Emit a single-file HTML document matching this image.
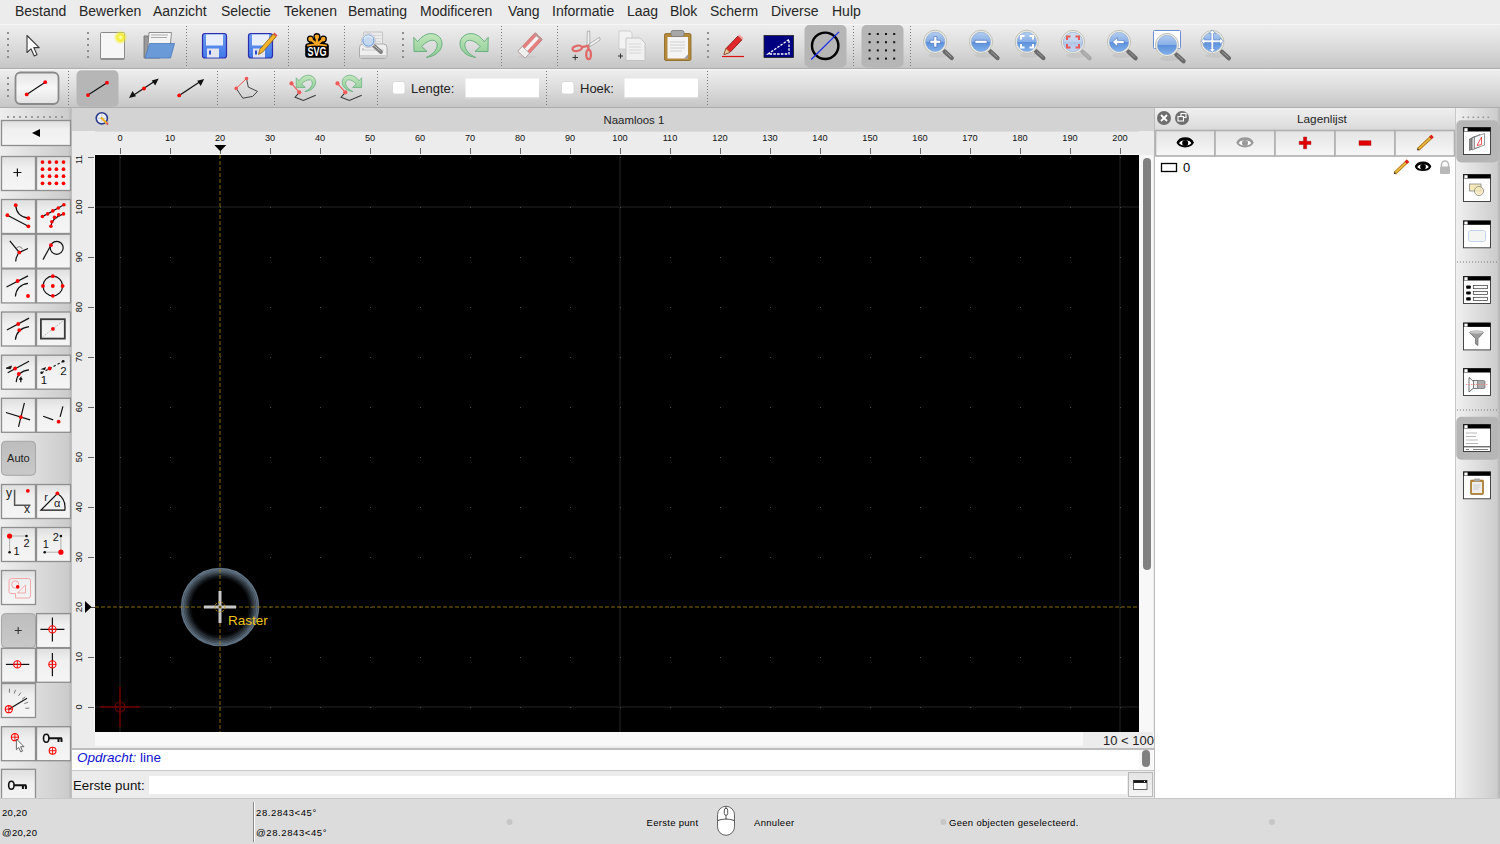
<!DOCTYPE html>
<html><head><meta charset="utf-8"><style>
*{margin:0;padding:0;box-sizing:border-box}
html,body{width:1500px;height:844px;overflow:hidden}
body{position:relative;background:#ececec;font-family:"Liberation Sans",sans-serif;color:#222}
.a{position:absolute}
.mi{position:absolute;top:2px;font-size:14px;line-height:18px;color:#262626}
.tb{background:linear-gradient(#eeeeee,#dedede 45%,#c6c6c6)}
svg{position:absolute;overflow:visible}
.st{position:absolute;font-size:9.5px;color:#000;letter-spacing:0.3px;line-height:11px;white-space:nowrap}
.rl{position:absolute;font-size:9.2px;line-height:10px;color:#111;text-align:center;width:30px}
.rv{position:absolute;font-size:9.2px;line-height:10px;color:#111;text-align:center;width:30px;transform:rotate(-90deg)}
</style></head><body>
<div class="a" style="left:0;top:0;width:1500px;height:24px;background:#ececec"></div>
<div class="mi" style="left:15px">Bestand</div>
<div class="mi" style="left:79px">Bewerken</div>
<div class="mi" style="left:153px">Aanzicht</div>
<div class="mi" style="left:221px">Selectie</div>
<div class="mi" style="left:284px">Tekenen</div>
<div class="mi" style="left:348px">Bemating</div>
<div class="mi" style="left:420px">Modificeren</div>
<div class="mi" style="left:508px">Vang</div>
<div class="mi" style="left:552px">Informatie</div>
<div class="mi" style="left:627px">Laag</div>
<div class="mi" style="left:670px">Blok</div>
<div class="mi" style="left:710px">Scherm</div>
<div class="mi" style="left:771px">Diverse</div>
<div class="mi" style="left:832px">Hulp</div>
<div class="a tb" style="left:0;top:24px;width:1500px;height:45px;border-top:1px solid #f6f6f6;border-bottom:1px solid #adadad"></div>
<div class="a tb" style="left:0;top:69px;width:1500px;height:39px;border-top:1px solid #f6f6f6;border-bottom:1px solid #adadad"></div>
<div class="a" style="left:0;top:108px;width:71px;height:690px;background:linear-gradient(90deg,#eeeeee,#cccccc 96%,#b8b8b8)"></div>
<div class="a" style="left:71px;top:108px;width:1084px;height:690px;background:#ececec;border-left:1px solid #c0c0c0;border-right:1px solid #bcbcbc"></div>
<div class="a" style="left:72px;top:108px;width:1082px;height:23px;background:#d3d3d3"></div>
<div class="a" style="left:603.5px;top:113px;font-size:11.4px;line-height:14px;color:#222">Naamloos 1</div>
<div class="a" style="left:95px;top:154px;width:1044px;height:1px;background:#fafafa"></div>
<div class="a" style="left:94px;top:155px;width:1px;height:577px;background:#fafafa"></div>
<div class="a" style="left:72px;top:131px;width:1082px;height:1px;background:#dcdcdc"></div>
<svg style="left:95px;top:155px" width="1044" height="577" viewBox="0 0 1044 577" shape-rendering="crispEdges"><rect width="1044" height="577" fill="#000"/><rect x="24" y="0" width="2" height="577" fill="#121212"/><rect x="524" y="0" width="2" height="577" fill="#121212"/><rect x="1024" y="0" width="2" height="577" fill="#121212"/><rect x="0" y="51" width="1044" height="2" fill="#121212"/><rect x="0" y="551" width="1044" height="2" fill="#121212"/><path d="M25 2h1v1h-1zM25 52h1v1h-1zM25 102h1v1h-1zM25 152h1v1h-1zM25 202h1v1h-1zM25 252h1v1h-1zM25 302h1v1h-1zM25 352h1v1h-1zM25 402h1v1h-1zM25 452h1v1h-1zM25 502h1v1h-1zM25 552h1v1h-1zM75 2h1v1h-1zM75 52h1v1h-1zM75 102h1v1h-1zM75 152h1v1h-1zM75 202h1v1h-1zM75 252h1v1h-1zM75 302h1v1h-1zM75 352h1v1h-1zM75 402h1v1h-1zM75 452h1v1h-1zM75 502h1v1h-1zM75 552h1v1h-1zM125 2h1v1h-1zM125 52h1v1h-1zM125 102h1v1h-1zM125 152h1v1h-1zM125 202h1v1h-1zM125 252h1v1h-1zM125 302h1v1h-1zM125 352h1v1h-1zM125 402h1v1h-1zM125 452h1v1h-1zM125 502h1v1h-1zM125 552h1v1h-1zM175 2h1v1h-1zM175 52h1v1h-1zM175 102h1v1h-1zM175 152h1v1h-1zM175 202h1v1h-1zM175 252h1v1h-1zM175 302h1v1h-1zM175 352h1v1h-1zM175 402h1v1h-1zM175 452h1v1h-1zM175 502h1v1h-1zM175 552h1v1h-1zM225 2h1v1h-1zM225 52h1v1h-1zM225 102h1v1h-1zM225 152h1v1h-1zM225 202h1v1h-1zM225 252h1v1h-1zM225 302h1v1h-1zM225 352h1v1h-1zM225 402h1v1h-1zM225 452h1v1h-1zM225 502h1v1h-1zM225 552h1v1h-1zM275 2h1v1h-1zM275 52h1v1h-1zM275 102h1v1h-1zM275 152h1v1h-1zM275 202h1v1h-1zM275 252h1v1h-1zM275 302h1v1h-1zM275 352h1v1h-1zM275 402h1v1h-1zM275 452h1v1h-1zM275 502h1v1h-1zM275 552h1v1h-1zM325 2h1v1h-1zM325 52h1v1h-1zM325 102h1v1h-1zM325 152h1v1h-1zM325 202h1v1h-1zM325 252h1v1h-1zM325 302h1v1h-1zM325 352h1v1h-1zM325 402h1v1h-1zM325 452h1v1h-1zM325 502h1v1h-1zM325 552h1v1h-1zM375 2h1v1h-1zM375 52h1v1h-1zM375 102h1v1h-1zM375 152h1v1h-1zM375 202h1v1h-1zM375 252h1v1h-1zM375 302h1v1h-1zM375 352h1v1h-1zM375 402h1v1h-1zM375 452h1v1h-1zM375 502h1v1h-1zM375 552h1v1h-1zM425 2h1v1h-1zM425 52h1v1h-1zM425 102h1v1h-1zM425 152h1v1h-1zM425 202h1v1h-1zM425 252h1v1h-1zM425 302h1v1h-1zM425 352h1v1h-1zM425 402h1v1h-1zM425 452h1v1h-1zM425 502h1v1h-1zM425 552h1v1h-1zM475 2h1v1h-1zM475 52h1v1h-1zM475 102h1v1h-1zM475 152h1v1h-1zM475 202h1v1h-1zM475 252h1v1h-1zM475 302h1v1h-1zM475 352h1v1h-1zM475 402h1v1h-1zM475 452h1v1h-1zM475 502h1v1h-1zM475 552h1v1h-1zM525 2h1v1h-1zM525 52h1v1h-1zM525 102h1v1h-1zM525 152h1v1h-1zM525 202h1v1h-1zM525 252h1v1h-1zM525 302h1v1h-1zM525 352h1v1h-1zM525 402h1v1h-1zM525 452h1v1h-1zM525 502h1v1h-1zM525 552h1v1h-1zM575 2h1v1h-1zM575 52h1v1h-1zM575 102h1v1h-1zM575 152h1v1h-1zM575 202h1v1h-1zM575 252h1v1h-1zM575 302h1v1h-1zM575 352h1v1h-1zM575 402h1v1h-1zM575 452h1v1h-1zM575 502h1v1h-1zM575 552h1v1h-1zM625 2h1v1h-1zM625 52h1v1h-1zM625 102h1v1h-1zM625 152h1v1h-1zM625 202h1v1h-1zM625 252h1v1h-1zM625 302h1v1h-1zM625 352h1v1h-1zM625 402h1v1h-1zM625 452h1v1h-1zM625 502h1v1h-1zM625 552h1v1h-1zM675 2h1v1h-1zM675 52h1v1h-1zM675 102h1v1h-1zM675 152h1v1h-1zM675 202h1v1h-1zM675 252h1v1h-1zM675 302h1v1h-1zM675 352h1v1h-1zM675 402h1v1h-1zM675 452h1v1h-1zM675 502h1v1h-1zM675 552h1v1h-1zM725 2h1v1h-1zM725 52h1v1h-1zM725 102h1v1h-1zM725 152h1v1h-1zM725 202h1v1h-1zM725 252h1v1h-1zM725 302h1v1h-1zM725 352h1v1h-1zM725 402h1v1h-1zM725 452h1v1h-1zM725 502h1v1h-1zM725 552h1v1h-1zM775 2h1v1h-1zM775 52h1v1h-1zM775 102h1v1h-1zM775 152h1v1h-1zM775 202h1v1h-1zM775 252h1v1h-1zM775 302h1v1h-1zM775 352h1v1h-1zM775 402h1v1h-1zM775 452h1v1h-1zM775 502h1v1h-1zM775 552h1v1h-1zM825 2h1v1h-1zM825 52h1v1h-1zM825 102h1v1h-1zM825 152h1v1h-1zM825 202h1v1h-1zM825 252h1v1h-1zM825 302h1v1h-1zM825 352h1v1h-1zM825 402h1v1h-1zM825 452h1v1h-1zM825 502h1v1h-1zM825 552h1v1h-1zM875 2h1v1h-1zM875 52h1v1h-1zM875 102h1v1h-1zM875 152h1v1h-1zM875 202h1v1h-1zM875 252h1v1h-1zM875 302h1v1h-1zM875 352h1v1h-1zM875 402h1v1h-1zM875 452h1v1h-1zM875 502h1v1h-1zM875 552h1v1h-1zM925 2h1v1h-1zM925 52h1v1h-1zM925 102h1v1h-1zM925 152h1v1h-1zM925 202h1v1h-1zM925 252h1v1h-1zM925 302h1v1h-1zM925 352h1v1h-1zM925 402h1v1h-1zM925 452h1v1h-1zM925 502h1v1h-1zM925 552h1v1h-1zM975 2h1v1h-1zM975 52h1v1h-1zM975 102h1v1h-1zM975 152h1v1h-1zM975 202h1v1h-1zM975 252h1v1h-1zM975 302h1v1h-1zM975 352h1v1h-1zM975 402h1v1h-1zM975 452h1v1h-1zM975 502h1v1h-1zM975 552h1v1h-1zM1025 2h1v1h-1zM1025 52h1v1h-1zM1025 102h1v1h-1zM1025 152h1v1h-1zM1025 202h1v1h-1zM1025 252h1v1h-1zM1025 302h1v1h-1zM1025 352h1v1h-1zM1025 402h1v1h-1zM1025 452h1v1h-1zM1025 502h1v1h-1zM1025 552h1v1h-1z" fill="#4a4a4a"/><g transform="translate(125 452)" shape-rendering="auto"><circle r="38.4" fill="none" stroke="#6a7e90" stroke-opacity="0.9" stroke-width="1.6"/><circle r="36.9" fill="none" stroke="#6a7e90" stroke-opacity="0.8" stroke-width="1.6"/><circle r="35.4" fill="none" stroke="#6a7e90" stroke-opacity="0.66" stroke-width="1.6"/><circle r="33.9" fill="none" stroke="#6a7e90" stroke-opacity="0.5" stroke-width="1.6"/><circle r="32.4" fill="none" stroke="#6a7e90" stroke-opacity="0.34" stroke-width="1.6"/><circle r="30.9" fill="none" stroke="#6a7e90" stroke-opacity="0.2" stroke-width="1.6"/><circle r="29.4" fill="none" stroke="#6a7e90" stroke-opacity="0.09" stroke-width="1.6"/></g><line x1="125" y1="0" x2="125" y2="577" stroke="#a88210" stroke-opacity="0.4" stroke-width="2" stroke-dasharray="4 2"/><line x1="0" y1="452" x2="1044" y2="452" stroke="#a88210" stroke-opacity="0.4" stroke-width="2" stroke-dasharray="4 2"/><g stroke="#580000" stroke-width="1.6" fill="none"><path d="M5 552H45M25 532V572"/></g><circle cx="25" cy="552" r="5" stroke="#6a0000" stroke-width="1.1" fill="none" shape-rendering="auto"/></svg>
<svg style="left:175px;top:562px" width="90" height="90" viewBox="-45 -45 90 90">
<path d="M-16 -1.5h32v3h-32zM-1.5 -16h3v32h-3z" fill="#c9c9c9"/>
<circle r="5" fill="none" stroke="#c89a00" stroke-width="1" stroke-dasharray="2 1.5"/>
<circle r="1.5" fill="#6e5300"/>
</svg>
<div class="a" style="left:228px;top:613px;font-size:13.5px;line-height:16px;color:#f2c418">Raster</div>
<div class="rl" style="left:105px;top:132.6px">0</div>
<div class="rl" style="left:155px;top:132.6px">10</div>
<div class="rl" style="left:205px;top:132.6px">20</div>
<div class="rl" style="left:255px;top:132.6px">30</div>
<div class="rl" style="left:305px;top:132.6px">40</div>
<div class="rl" style="left:355px;top:132.6px">50</div>
<div class="rl" style="left:405px;top:132.6px">60</div>
<div class="rl" style="left:455px;top:132.6px">70</div>
<div class="rl" style="left:505px;top:132.6px">80</div>
<div class="rl" style="left:555px;top:132.6px">90</div>
<div class="rl" style="left:605px;top:132.6px">100</div>
<div class="rl" style="left:655px;top:132.6px">110</div>
<div class="rl" style="left:705px;top:132.6px">120</div>
<div class="rl" style="left:755px;top:132.6px">130</div>
<div class="rl" style="left:805px;top:132.6px">140</div>
<div class="rl" style="left:855px;top:132.6px">150</div>
<div class="rl" style="left:905px;top:132.6px">160</div>
<div class="rl" style="left:955px;top:132.6px">170</div>
<div class="rl" style="left:1005px;top:132.6px">180</div>
<div class="rl" style="left:1055px;top:132.6px">190</div>
<div class="rl" style="left:1105px;top:132.6px">200</div>
<div class="rv" style="left:63.5px;top:702px">0</div>
<div class="rv" style="left:63.5px;top:652px">10</div>
<div class="rv" style="left:63.5px;top:602px">20</div>
<div class="rv" style="left:63.5px;top:552px">30</div>
<div class="rv" style="left:63.5px;top:502px">40</div>
<div class="rv" style="left:63.5px;top:452px">50</div>
<div class="rv" style="left:63.5px;top:402px">60</div>
<div class="rv" style="left:63.5px;top:352px">70</div>
<div class="rv" style="left:63.5px;top:302px">80</div>
<div class="rv" style="left:63.5px;top:252px">90</div>
<div class="rv" style="left:63.5px;top:202px">100</div>
<div class="rv" style="left:63.5px;top:152px">110</div>
<svg style="left:0;top:0" width="1500" height="844" shape-rendering="crispEdges"><path d="M120 148h1v6h-1zM170 148h1v6h-1zM220 148h1v6h-1zM270 148h1v6h-1zM320 148h1v6h-1zM370 148h1v6h-1zM420 148h1v6h-1zM470 148h1v6h-1zM520 148h1v6h-1zM570 148h1v6h-1zM620 148h1v6h-1zM670 148h1v6h-1zM720 148h1v6h-1zM770 148h1v6h-1zM820 148h1v6h-1zM870 148h1v6h-1zM920 148h1v6h-1zM970 148h1v6h-1zM1020 148h1v6h-1zM1070 148h1v6h-1zM1120 148h1v6h-1zM88 707h6v1h-6zM88 657h6v1h-6zM88 607h6v1h-6zM88 557h6v1h-6zM88 507h6v1h-6zM88 457h6v1h-6zM88 407h6v1h-6zM88 357h6v1h-6zM88 307h6v1h-6zM88 257h6v1h-6zM88 207h6v1h-6zM88 157h6v1h-6z" fill="#666"/><path d="M214.3 145h12l-6 6.3z" fill="#000" shape-rendering="auto"/><path d="M85 601v12l6.5-6z" fill="#000" shape-rendering="auto"/><rect x="91" y="606.5" width="4" height="1" fill="#444"/></svg>
<div class="a" style="left:72px;top:131px;width:23px;height:24px;background:#ececec"></div>
<div class="a" style="left:1139px;top:131px;width:14px;height:601px;background:#f8f8f8"></div>
<div class="a" style="left:1139px;top:131px;width:14px;height:24px;background:#ececec"></div>
<div class="a" style="left:1143px;top:158px;width:8px;height:412px;background:#808080;border-radius:4px"></div>
<div class="a" style="left:95px;top:732px;width:1059px;height:14px;background:#f8f8f8"></div>
<div class="a" style="left:1083px;top:732px;width:70px;height:16px;background:#ececec"></div>
<div class="a" style="left:1103px;top:733px;font-size:13px;line-height:15px;color:#222">10 &lt; 100</div>
<div class="a" style="left:72px;top:748px;width:1082px;height:2px;background:#bdbdbd"></div>
<div class="a" style="left:72px;top:750px;width:1082px;height:20px;background:#fff"></div>
<div class="a" style="left:1139px;top:750px;width:14px;height:20px;background:#f8f8f8"></div>
<div class="a" style="left:1142px;top:750px;width:8px;height:17px;background:#808080;border-radius:4px"></div>
<div class="a" style="left:77px;top:750px;font-size:13.5px;line-height:16px;color:#1010d0"><i>Opdracht:</i> line</div>
<div class="a" style="left:72px;top:770px;width:1082px;height:1px;background:#c8c8c8"></div>
<div class="a" style="left:72px;top:771px;width:1082px;height:27px;background:#ececec"></div>
<div class="a" style="left:73px;top:778px;font-size:13.3px;line-height:16px;color:#111">Eerste punt:</div>
<div class="a" style="left:149px;top:776px;width:978px;height:18px;background:#fff"></div>
<div class="a" style="left:1128px;top:772px;width:25px;height:25px;border:1px solid #b8b8b8;background:linear-gradient(#e4e4e4,#f4f4f4)"></div>
<div class="a" style="left:1155px;top:108px;width:300px;height:690px;background:#fff"></div>
<div class="a" style="left:1155px;top:108px;width:300px;height:22px;background:linear-gradient(#efefef,#dadada)"></div>
<div class="a" style="left:1297px;top:112px;font-size:11.8px;line-height:14px;color:#222">Lagenlijst</div>
<div class="a" style="left:1455px;top:108px;width:45px;height:690px;background:linear-gradient(90deg,#f0f0f0,#cdcdcd 92%,#b4b4b4);border-left:1px solid #c8c8c8"></div>
<div class="a" style="left:0;top:798px;width:1500px;height:46px;background:#dcdcdc;border-top:1px solid #c8c8c8"></div>
<div class="st" style="left:2px;top:807px">20,20</div>
<div class="st" style="left:2px;top:827px">@20,20</div>
<div class="a" style="left:253px;top:802px;width:1px;height:40px;background:#8a8a8a"></div>
<div class="st" style="left:256px;top:807px;letter-spacing:0.6px">28.2843&lt;45°</div>
<div class="st" style="left:256px;top:827px;letter-spacing:0.6px">@28.2843&lt;45°</div><svg style="left:0;top:0" width="1500" height="108" viewBox="0 0 1500 108"><defs>
<linearGradient id="btn" x1="0" y1="0" x2="0" y2="1"><stop offset="0" stop-color="#dedede"/><stop offset="0.35" stop-color="#f0f0f0"/><stop offset="1" stop-color="#f5f5f5"/></linearGradient>
<linearGradient id="prs" x1="0" y1="0" x2="0" y2="1"><stop offset="0" stop-color="#bdbdbd"/><stop offset="1" stop-color="#c9c9c9"/></linearGradient>
<linearGradient id="lens" x1="0" y1="0" x2="0" y2="1"><stop offset="0" stop-color="#b4cdef"/><stop offset="0.5" stop-color="#86aee6"/><stop offset="0.52" stop-color="#5d90dc"/><stop offset="1" stop-color="#7fb0ea"/></linearGradient>
<linearGradient id="lensf" x1="0" y1="0" x2="0" y2="1"><stop offset="0" stop-color="#d3dff0"/><stop offset="0.5" stop-color="#c0d2ec"/><stop offset="0.52" stop-color="#b0c6e8"/><stop offset="1" stop-color="#c4d6f0"/></linearGradient>
<linearGradient id="flop" x1="0" y1="0" x2="0" y2="1"><stop offset="0" stop-color="#6e9cf0"/><stop offset="1" stop-color="#3f78e8"/></linearGradient>
<linearGradient id="grn" x1="0" y1="0" x2="0" y2="1"><stop offset="0" stop-color="#c2e6bc"/><stop offset="1" stop-color="#8ccc94"/></linearGradient>
<linearGradient id="dockbtn" x1="0" y1="0" x2="0" y2="1"><stop offset="0" stop-color="#e4e4e4"/><stop offset="1" stop-color="#f7f7f7"/></linearGradient>
<linearGradient id="rb" x1="0" y1="0" x2="0" y2="1"><stop offset="0" stop-color="#e6e6e6"/><stop offset="0.5" stop-color="#f7f7f7"/><stop offset="1" stop-color="#e2e2e2"/></linearGradient>
<radialGradient id="glow" cx="0.5" cy="0.5" r="0.5"><stop offset="0" stop-color="#ffffc0"/><stop offset="0.45" stop-color="#f4ee30"/><stop offset="1" stop-color="#f4ee30" stop-opacity="0"/></radialGradient>
</defs><rect x="7" y="32" width="2" height="2" fill="#8e8e8e"/><rect x="7" y="38" width="2" height="2" fill="#8e8e8e"/><rect x="7" y="44" width="2" height="2" fill="#8e8e8e"/><rect x="7" y="50" width="2" height="2" fill="#8e8e8e"/><rect x="7" y="56" width="2" height="2" fill="#8e8e8e"/><rect x="87" y="32" width="2" height="2" fill="#8e8e8e"/><rect x="87" y="38" width="2" height="2" fill="#8e8e8e"/><rect x="87" y="44" width="2" height="2" fill="#8e8e8e"/><rect x="87" y="50" width="2" height="2" fill="#8e8e8e"/><rect x="87" y="56" width="2" height="2" fill="#8e8e8e"/><rect x="402" y="32" width="2" height="2" fill="#8e8e8e"/><rect x="402" y="38" width="2" height="2" fill="#8e8e8e"/><rect x="402" y="44" width="2" height="2" fill="#8e8e8e"/><rect x="402" y="50" width="2" height="2" fill="#8e8e8e"/><rect x="402" y="56" width="2" height="2" fill="#8e8e8e"/><rect x="707" y="32" width="2" height="2" fill="#8e8e8e"/><rect x="707" y="38" width="2" height="2" fill="#8e8e8e"/><rect x="707" y="44" width="2" height="2" fill="#8e8e8e"/><rect x="707" y="50" width="2" height="2" fill="#8e8e8e"/><rect x="707" y="56" width="2" height="2" fill="#8e8e8e"/><line x1="186.5" y1="26" x2="186.5" y2="66" stroke="#7a7a7a" stroke-width="1" stroke-dasharray="1 2"/><line x1="288.5" y1="26" x2="288.5" y2="66" stroke="#7a7a7a" stroke-width="1" stroke-dasharray="1 2"/><line x1="344.5" y1="26" x2="344.5" y2="66" stroke="#7a7a7a" stroke-width="1" stroke-dasharray="1 2"/><line x1="501.5" y1="26" x2="501.5" y2="66" stroke="#7a7a7a" stroke-width="1" stroke-dasharray="1 2"/><line x1="557.5" y1="26" x2="557.5" y2="66" stroke="#7a7a7a" stroke-width="1" stroke-dasharray="1 2"/><line x1="853.5" y1="26" x2="853.5" y2="66" stroke="#7a7a7a" stroke-width="1" stroke-dasharray="1 2"/><line x1="910.5" y1="26" x2="910.5" y2="66" stroke="#7a7a7a" stroke-width="1" stroke-dasharray="1 2"/><rect x="7" y="77" width="2" height="2" fill="#8e8e8e"/><rect x="7" y="83" width="2" height="2" fill="#8e8e8e"/><rect x="7" y="89" width="2" height="2" fill="#8e8e8e"/><rect x="7" y="95" width="2" height="2" fill="#8e8e8e"/><line x1="68.5" y1="71" x2="68.5" y2="105" stroke="#7a7a7a" stroke-width="1" stroke-dasharray="1 2"/><line x1="217.5" y1="71" x2="217.5" y2="105" stroke="#7a7a7a" stroke-width="1" stroke-dasharray="1 2"/><line x1="274.5" y1="71" x2="274.5" y2="105" stroke="#7a7a7a" stroke-width="1" stroke-dasharray="1 2"/><line x1="377.5" y1="71" x2="377.5" y2="105" stroke="#7a7a7a" stroke-width="1" stroke-dasharray="1 2"/><line x1="546.5" y1="71" x2="546.5" y2="105" stroke="#7a7a7a" stroke-width="1" stroke-dasharray="1 2"/><line x1="707.5" y1="71" x2="707.5" y2="105" stroke="#7a7a7a" stroke-width="1" stroke-dasharray="1 2"/><path d="M27 35.5V52.5L31 48.8L34.2 56L37 54.7L33.8 47.6H39.2Z" fill="#fff" stroke="#3a3a3a" stroke-width="1.1" stroke-linejoin="round"/><rect x="100.5" y="32.5" width="24" height="27" rx="1" fill="#f6f6f6" stroke="#8a8a8a"/><rect x="101" y="58" width="23" height="2" fill="#909090"/><circle cx="120.6" cy="37.4" r="7" fill="url(#glow)"/><path d="M144 36h9l2 2h5v20h-16z" fill="#9a9a9a" stroke="#6a6a6a" stroke-width="0.8"/><path d="M149 32.5h22.5l-2 20h-22z" fill="#f4f4f4" stroke="#777" stroke-width="0.8"/><path d="M151 35h17M151 37.5h16" stroke="#aaa" stroke-width="1.2"/><path d="M149.5 43.5h25l-4 14.5h-25.5z" fill="#6a9ad8" stroke="#4a78b8" stroke-width="0.8"/><rect x="202.5" y="33.5" width="24" height="24.5" rx="2.5" fill="url(#flop)" stroke="#2c2cb0" stroke-width="1.2"/><rect x="206" y="34.5" width="17" height="11" fill="#e8eefb"/><rect x="207" y="48.5" width="12" height="9" fill="#e4e4ec"/><rect x="209" y="50.5" width="2" height="4" fill="#2a4ad0"/><rect x="248.5" y="33.5" width="24" height="24.5" rx="2.5" fill="url(#flop)" stroke="#2c2cb0" stroke-width="1.2"/><rect x="252" y="34.5" width="17" height="11" fill="#e8eefb"/><rect x="253" y="48.5" width="12" height="9" fill="#e4e4ec"/><rect x="255" y="50.5" width="2" height="4" fill="#2a4ad0"/><path d="M258.5 54.5l1.2-5 13.5-15.5 3 2.6-13.5 15.5z" fill="#f2b52a" stroke="#8a5a10" stroke-width="0.8"/><path d="M273.2 34l3 2.6 1.2-1.4-3-2.6z" fill="#e05050"/><g fill="#000"><rect x="305.2" y="43.3" width="23.6" height="14.5" rx="3"/><circle cx="316.9" cy="36.6" r="3.5"/><circle cx="310.4" cy="39" r="3.5"/><circle cx="323.4" cy="39" r="3.5"/><path d="M308 44L312 38.5H322L326 44z"/></g><g stroke="#f5a623" stroke-width="2.4" stroke-linecap="round"><path d="M316.9 44.5V37M316.9 44.5L310.6 39.2M316.9 44.5L323.2 39.2"/></g><g fill="#f5a623"><circle cx="316.9" cy="36.8" r="2.3"/><circle cx="310.5" cy="39.1" r="2.3"/><circle cx="323.3" cy="39.1" r="2.3"/></g><path d="M307.2 45.6Q317 43.8 326.8 45.6" fill="none" stroke="#f5a623" stroke-width="1.7"/><text x="317.1" y="56" text-anchor="middle" font-family="Liberation Sans" font-weight="bold" font-size="12" fill="#fff" textLength="19" lengthAdjust="spacingAndGlyphs">SVG</text><rect x="363.5" y="32" width="19" height="15" rx="1" fill="#ececec" stroke="#c0c0c0" stroke-width="0.9"/><path d="M372 35.5h9M372 38.5h9M372 41.5h9" stroke="#d4d4d4" stroke-width="1"/><path d="M359.5 47.5a3.5 3.5 0 0 1 3.5-3.5h20.5a3.5 3.5 0 0 1 3.5 3.5v8.5a2.5 2.5 0 0 1-2.5 2.5h-22.5a2.5 2.5 0 0 1-2.5-2.5z" fill="#efefef" stroke="#a4a4a4" stroke-width="0.9"/><path d="M360 55h26.5v3h-26.5z" fill="#cfcfcf"/><path d="M362 50h22" stroke="#c8c8c8" stroke-width="0.9"/><circle cx="363" cy="49" r="0.6" fill="#666"/><path d="M373.3 45.3L381 52" stroke="#7c7c7c" stroke-width="3.8" stroke-linecap="round"/><path d="M373.8 45.2L380.6 51.1" stroke="#d8d8d8" stroke-width="1" opacity="0.8"/><circle cx="368.4" cy="40.6" r="7" fill="#f6f6f6" stroke="#b8b8b8" stroke-width="0.7"/><circle cx="368.4" cy="40.6" r="5.6" fill="#c4d8f0" stroke="#4f86d4" stroke-width="0.9"/><path d="M364 39a4.5 4.5 0 0 1 8.5 0" fill="none" stroke="#e8f0fa" stroke-width="1.4" opacity="0.8"/><path d="M413.8 37.3L414 51.6L427 51.4L421.7 46.5C425 43 429 40.3 432.5 40.3C436 40.3 437.2 43 437.2 45C437.2 50 432 55 426.3 57.4C436 56.5 442 50 442 44C442 37.5 437 33.6 431 33.6C426 33.6 421 37 417.7 41.7Z" fill="url(#grn)" stroke="#62aa7c" stroke-width="0.9" stroke-linejoin="round"/><path d="M413.8 37.3L414 51.6L427 51.4L421.7 46.5C425 43 429 40.3 432.5 40.3C436 40.3 437.2 43 437.2 45C437.2 50 432 55 426.3 57.4C436 56.5 442 50 442 44C442 37.5 437 33.6 431 33.6C426 33.6 421 37 417.7 41.7Z" transform="translate(902 0) scale(-1 1)" fill="url(#grn)" stroke="#62aa7c" stroke-width="0.9" stroke-linejoin="round"/><ellipse cx="527" cy="57" rx="10" ry="1.5" fill="#c8c8c8" opacity="0.8"/><g transform="rotate(-47 530 45.5)"><rect x="517.5" y="40.5" width="25.5" height="10" rx="1" fill="#e58080" stroke="#c46060" stroke-width="0.6"/><rect x="517.5" y="43.8" width="25.5" height="3.4" fill="#f2f2f2"/><rect x="541" y="40.5" width="2" height="10" fill="#b89a9a"/><rect x="517.5" y="40.5" width="6.5" height="10" fill="#efefef" stroke="#a0a0a0" stroke-width="0.6"/></g><path d="M587 46.5L587.3 31.2L589.8 31L589.8 46zM588.5 44.5L599.5 37.3L600.2 40L589.5 47z" fill="#f2f2f2" stroke="#9a9a9a" stroke-width="0.7"/><g fill="none" stroke="#e06a6a" stroke-width="2.3"><ellipse cx="577.2" cy="48.3" rx="4.8" ry="2.6" transform="rotate(-12 577.2 48.3)"/><ellipse cx="588.6" cy="54.5" rx="2.3" ry="4.6"/><path d="M581.8 47.2L588 45.8L588.6 50"/></g><path d="M572.5 57.5h5.5M575.2 54.8v5.5" stroke="#333" stroke-width="1"/><path d="M619 31h11l2 2v16h-13z" fill="#f2f2f2" stroke="#c8c8c8" stroke-width="0.8"/><path d="M626 38h14l5 5v17.5h-19z" fill="#f0f0f0" stroke="#bdbdbd" stroke-width="0.8"/><path d="M629 44h12M629 47h12M629 50h12M629 53h12" stroke="#d0d0d0" stroke-width="0.8"/><path d="M618 56h5M620.5 53.5v5" stroke="#333" stroke-width="1"/><rect x="664.5" y="33.5" width="26.5" height="27" rx="1.5" fill="#b48a3a" stroke="#8a6420" stroke-width="0.8"/><rect x="667.5" y="37" width="20.5" height="21.5" fill="#f4f4f4"/><path d="M670 42h15M670 45h15M670 48h15M670 51h12" stroke="#c8c8c8" stroke-width="0.8"/><path d="M684 58.5l4-4v4z" fill="#9a9a9a"/><rect x="671" y="30.5" width="13" height="6" rx="2" fill="#a8a8a8" stroke="#7a7a7a" stroke-width="0.8"/><path d="M722 56.5h22" stroke="#e01010" stroke-width="1.2"/><path d="M724 54.5l2-6 12-12.5 4 3.8-12 12.5z" fill="#e02828" stroke="#801010" stroke-width="0.8"/><path d="M724 54.5l2-6 4 3.8z" fill="#f0d0a0" stroke="#805020" stroke-width="0.6"/><path d="M738 36l4 3.8 1.5-1.6-4-3.8z" fill="#f4a0a0"/><rect x="764" y="35.5" width="29.5" height="22" fill="#000080" stroke="#222" stroke-width="0.8"/><path d="M768 54l21-14.5v14.5z" fill="none" stroke="#fff" stroke-width="1.3" stroke-dasharray="2.5 1.3"/><rect x="804.5" y="25" width="42" height="42.5" rx="5" fill="#b6b6b6"/><circle cx="825.2" cy="45.8" r="13.2" fill="none" stroke="#000" stroke-width="2.4"/><path d="M811.2 59.5L839 31.9" stroke="#1a2ae8" stroke-width="1.2"/><rect x="861.5" y="25" width="42" height="42.5" rx="5" fill="#b6b6b6"/><rect x="868.6" y="33.0" width="2" height="2" fill="#111"/><rect x="868.6" y="41.2" width="2" height="2" fill="#111"/><rect x="868.6" y="49.4" width="2" height="2" fill="#111"/><rect x="868.6" y="57.599999999999994" width="2" height="2" fill="#111"/><rect x="876.8000000000001" y="33.0" width="2" height="2" fill="#111"/><rect x="876.8000000000001" y="41.2" width="2" height="2" fill="#111"/><rect x="876.8000000000001" y="49.4" width="2" height="2" fill="#111"/><rect x="876.8000000000001" y="57.599999999999994" width="2" height="2" fill="#111"/><rect x="885.0" y="33.0" width="2" height="2" fill="#111"/><rect x="885.0" y="41.2" width="2" height="2" fill="#111"/><rect x="885.0" y="49.4" width="2" height="2" fill="#111"/><rect x="885.0" y="57.599999999999994" width="2" height="2" fill="#111"/><rect x="893.2" y="33.0" width="2" height="2" fill="#111"/><rect x="893.2" y="41.2" width="2" height="2" fill="#111"/><rect x="893.2" y="49.4" width="2" height="2" fill="#111"/><rect x="893.2" y="57.599999999999994" width="2" height="2" fill="#111"/><ellipse cx="938.2" cy="55.3" rx="10" ry="2.5" fill="#000" opacity="0.05"/><path d="M944.5 51.3L951.7 58.0" stroke="#6a6a6a" stroke-width="4.4" stroke-linecap="round"/><path d="M945.2 51.599999999999994L951.2 57.099999999999994" stroke="#c8c8c8" stroke-width="0.9" opacity="0.6"/><circle cx="935.2" cy="41.8" r="11.6" fill="#eeeee8" stroke="#bcbcb2" stroke-width="0.9"/><circle cx="935.2" cy="41.8" r="9.7" fill="url(#lens)" stroke="#8aa6d0" stroke-width="0.6"/><path d="M930 40.3h3.8v-3.8h3v3.8h3.8v3h-3.8v3.8h-3v-3.8h-3.8z" fill="#fff" stroke="#3a64b4" stroke-width="0.6"/><ellipse cx="984" cy="55.3" rx="10" ry="2.5" fill="#000" opacity="0.05"/><path d="M990.3 51.3L997.5 58.0" stroke="#6a6a6a" stroke-width="4.4" stroke-linecap="round"/><path d="M991 51.599999999999994L997 57.099999999999994" stroke="#c8c8c8" stroke-width="0.9" opacity="0.6"/><circle cx="981" cy="41.8" r="11.6" fill="#eeeee8" stroke="#bcbcb2" stroke-width="0.9"/><circle cx="981" cy="41.8" r="9.7" fill="url(#lens)" stroke="#8aa6d0" stroke-width="0.6"/><path d="M975 40.3h12v3h-12z" fill="#fff" stroke="#3a64b4" stroke-width="0.6"/><ellipse cx="1029.8" cy="55.3" rx="10" ry="2.5" fill="#000" opacity="0.05"/><path d="M1036.1 51.3L1043.3 58.0" stroke="#6a6a6a" stroke-width="4.4" stroke-linecap="round"/><path d="M1036.8 51.599999999999994L1042.8 57.099999999999994" stroke="#c8c8c8" stroke-width="0.9" opacity="0.6"/><circle cx="1026.8" cy="41.8" r="11.6" fill="#eeeee8" stroke="#bcbcb2" stroke-width="0.9"/><circle cx="1026.8" cy="41.8" r="9.7" fill="url(#lens)" stroke="#8aa6d0" stroke-width="0.6"/><path d="M1021 39.5v-3.5h3.5M1029.5 36h3.5v3.5M1033 44v3.5h-3.5M1024.5 47.5h-3.5v-3.5" fill="none" stroke="#fff" stroke-width="2"/><ellipse cx="1076" cy="55.5" rx="10" ry="2.5" fill="#000" opacity="0.05"/><path d="M1082.3 51.5L1089.5 58.2" stroke="#a8a8a8" stroke-width="4.4" stroke-linecap="round"/><path d="M1083 51.8L1089 57.3" stroke="#c8c8c8" stroke-width="0.9" opacity="0.6"/><circle cx="1073" cy="42" r="11.6" fill="#eeeee8" stroke="#bcbcb2" stroke-width="0.9"/><circle cx="1073" cy="42" r="9.7" fill="url(#lensf)" stroke="#8aa6d0" stroke-width="0.6"/><path d="M1067 40v-3.5h3.5M1075.5 36.5h3.5v3.5M1079 44v3.5h-3.5M1070.5 47.5h-3.5v-3.5" fill="none" stroke="#e85a5a" stroke-width="2"/><ellipse cx="1122" cy="55.5" rx="10" ry="2.5" fill="#000" opacity="0.05"/><path d="M1128.3 51.5L1135.5 58.2" stroke="#6a6a6a" stroke-width="4.4" stroke-linecap="round"/><path d="M1129 51.8L1135 57.3" stroke="#c8c8c8" stroke-width="0.9" opacity="0.6"/><circle cx="1119" cy="42" r="11.6" fill="#eeeee8" stroke="#bcbcb2" stroke-width="0.9"/><circle cx="1119" cy="42" r="9.7" fill="url(#lens)" stroke="#8aa6d0" stroke-width="0.6"/><path d="M1112.5 42l5-4.5v3h6.5v3h-6.5v3z" fill="#fff" stroke="#3a64b4" stroke-width="0.5"/><rect x="1153.5" y="30.5" width="27" height="18" rx="1" fill="#fff" stroke="#6a8ed0" stroke-width="1"/><ellipse cx="1170" cy="58.5" rx="10" ry="2.5" fill="#000" opacity="0.05"/><path d="M1176.3 54.5L1183.5 61.2" stroke="#6a6a6a" stroke-width="4.4" stroke-linecap="round"/><path d="M1177 54.8L1183 60.3" stroke="#c8c8c8" stroke-width="0.9" opacity="0.6"/><circle cx="1167" cy="45" r="11.6" fill="#eeeee8" stroke="#bcbcb2" stroke-width="0.9"/><circle cx="1167" cy="45" r="9.7" fill="url(#lens)" stroke="#8aa6d0" stroke-width="0.6"/><ellipse cx="1215.3" cy="55.5" rx="10" ry="2.5" fill="#000" opacity="0.05"/><path d="M1221.6 51.5L1228.8 58.2" stroke="#6a6a6a" stroke-width="4.4" stroke-linecap="round"/><path d="M1222.3 51.8L1228.3 57.3" stroke="#c8c8c8" stroke-width="0.9" opacity="0.6"/><circle cx="1212.3" cy="42" r="11.6" fill="#eeeee8" stroke="#bcbcb2" stroke-width="0.9"/><circle cx="1212.3" cy="42" r="9.7" fill="url(#lens)" stroke="#8aa6d0" stroke-width="0.6"/><path d="M1212.3 30l3.2 3.5h-2v6.5h6.5v-2l3.5 3.2-3.5 3.2v-2h-6.5v6.5h2l-3.2 3.5-3.2-3.5h2v-6.5h-6.5v2l-3.5-3.2 3.5-3.2v2h6.5v-6.5h-2z" fill="#fff" stroke="#5a84cc" stroke-width="0.6"/><rect x="15.5" y="72.5" width="43" height="31.5" rx="5" fill="url(#rb)" stroke="#8a8a8a" stroke-width="1.8"/><path d="M26.7 94.4L45.2 82.2" stroke="#111" stroke-width="1.2"/><circle cx="26.7" cy="94.4" r="1.9" fill="#f00"/><circle cx="45.2" cy="82.2" r="1.9" fill="#f00"/><rect x="76.5" y="70.2" width="42" height="36.5" rx="5" fill="#b6b6b6"/><path d="M88 95.1L107 82.7" stroke="#111" stroke-width="1.2"/><circle cx="88" cy="95.1" r="1.9" fill="#f00"/><circle cx="107" cy="82.7" r="1.9" fill="#f00"/><path d="M133 95.5L155 81" stroke="#111" stroke-width="1.2"/><path d="M129 98l3.5-7 3.5 5.2z M158.7 78.6l-7 1.8 3.5 5.2z" fill="#111"/><circle cx="144" cy="88.5" r="1.9" fill="#f00"/><path d="M179.2 95.4L201 81" stroke="#111" stroke-width="1.2"/><path d="M204.2 79l-7 1.8 3.5 5.2z" fill="#111"/><circle cx="179.2" cy="95.4" r="1.9" fill="#f00"/><path d="M246.5 78.5L248.3 87.1L257.5 91.4L252.6 96.4L242.8 98.2L236.2 88.4" fill="none" stroke="#444" stroke-width="1"/><path d="M246.5 78.5L236.2 88.4" stroke="#ee5555" stroke-width="1"/><circle cx="246.5" cy="78.5" r="1.8" fill="#ee5555"/><circle cx="236.2" cy="88.4" r="1.8" fill="#ee5555"/><path d="M299.3 92.3L295.1 97.2L303.4 100.4L315.7 95.3" fill="none" stroke="#3a3a3a" stroke-width="1.1"/><path d="M291.5 83.4L299.3 92.3" stroke="#ee5a5a" stroke-width="1.1"/><circle cx="291.5" cy="83.4" r="2.1" fill="#ee5a5a"/><circle cx="299.3" cy="92.3" r="2.1" fill="#ee5a5a"/><path d="M413.8 37.3L414 51.6L427 51.4L421.7 46.5C425 43 429 40.3 432.5 40.3C436 40.3 437.2 43 437.2 45C437.2 50 432 55 426.3 57.4C436 56.5 442 50 442 44C442 37.5 437 33.6 431 33.6C426 33.6 421 37 417.7 41.7Z" transform="translate(296.2 75.2) scale(0.69) translate(-413.8 -33.6)" fill="url(#grn)" stroke="#62aa7c" stroke-width="1" stroke-linejoin="round"/><path d="M345.3 92.3L341.1 97.2L349.4 100.4L361.7 95.3" fill="none" stroke="#3a3a3a" stroke-width="1.1"/><path d="M337.5 83.4L345.3 92.3" stroke="#ee5a5a" stroke-width="1.1"/><circle cx="337.5" cy="83.4" r="2.1" fill="#ee5a5a"/><circle cx="345.3" cy="92.3" r="2.1" fill="#ee5a5a"/><path d="M413.8 37.3L414 51.6L427 51.4L421.7 46.5C425 43 429 40.3 432.5 40.3C436 40.3 437.2 43 437.2 45C437.2 50 432 55 426.3 57.4C436 56.5 442 50 442 44C442 37.5 437 33.6 431 33.6C426 33.6 421 37 417.7 41.7Z" transform="translate(361.7 75.2) scale(-0.69 0.69) translate(-413.8 -33.6)" fill="url(#grn)" stroke="#62aa7c" stroke-width="1" stroke-linejoin="round"/><rect x="392.5" y="81.5" width="12.5" height="12.5" rx="2.5" fill="#fff" stroke="#d4d4d4" stroke-width="0.8"/><rect x="465.5" y="78.5" width="73.5" height="20" fill="#fff"/><rect x="465.5" y="97.5" width="73.5" height="1" fill="#c4c4c4"/><rect x="561.5" y="81.5" width="12.5" height="12.5" rx="2.5" fill="#fff" stroke="#d4d4d4" stroke-width="0.8"/><rect x="624.5" y="78.5" width="73.5" height="20" fill="#fff"/><rect x="624.5" y="97.5" width="73.5" height="1" fill="#c4c4c4"/><text x="411" y="92.8" font-family="Liberation Sans" font-size="13" fill="#222">Lengte:</text><text x="580" y="92.8" font-family="Liberation Sans" font-size="13" fill="#222">Hoek:</text></svg><svg style="left:0;top:108px;overflow:hidden" width="72" height="690" viewBox="0 108 72 690"><rect x="7" y="116" width="2" height="2" fill="#9a9a9a"/><rect x="13" y="116" width="2" height="2" fill="#9a9a9a"/><rect x="19" y="116" width="2" height="2" fill="#9a9a9a"/><rect x="25" y="116" width="2" height="2" fill="#9a9a9a"/><rect x="31" y="116" width="2" height="2" fill="#9a9a9a"/><rect x="37" y="116" width="2" height="2" fill="#9a9a9a"/><rect x="43" y="116" width="2" height="2" fill="#9a9a9a"/><rect x="49" y="116" width="2" height="2" fill="#9a9a9a"/><rect x="55" y="116" width="2" height="2" fill="#9a9a9a"/><rect x="61" y="116" width="2" height="2" fill="#9a9a9a"/><rect x="1.5" y="120.5" width="69" height="25" fill="url(#btn)" stroke="#8e8e8e" stroke-width="1.3"/><path d="M32 133L40 128.9V137z" fill="#000"/><rect x="1.5" y="156.5" width="34" height="34" fill="url(#btn)" stroke="#8e8e8e" stroke-width="1.3"/><g transform="translate(1.5 156.5)"><path d="M11.9 16h8M15.9 12v8" stroke="#111" stroke-width="1.2"/></g><rect x="36.5" y="156.5" width="34" height="34" fill="url(#btn)" stroke="#8e8e8e" stroke-width="1.3"/><g transform="translate(36.5 156.5)"><circle cx="6" cy="5.6" r="1.85" fill="#ff0000"/><circle cx="6" cy="12.7" r="1.85" fill="#ff0000"/><circle cx="6" cy="19.7" r="1.85" fill="#ff0000"/><circle cx="6" cy="26.8" r="1.85" fill="#ff0000"/><circle cx="13.1" cy="5.6" r="1.85" fill="#ff0000"/><circle cx="13.1" cy="12.7" r="1.85" fill="#ff0000"/><circle cx="13.1" cy="19.7" r="1.85" fill="#ff0000"/><circle cx="13.1" cy="26.8" r="1.85" fill="#ff0000"/><circle cx="19.9" cy="5.6" r="1.85" fill="#ff0000"/><circle cx="19.9" cy="12.7" r="1.85" fill="#ff0000"/><circle cx="19.9" cy="19.7" r="1.85" fill="#ff0000"/><circle cx="19.9" cy="26.8" r="1.85" fill="#ff0000"/><circle cx="27" cy="5.6" r="1.85" fill="#ff0000"/><circle cx="27" cy="12.7" r="1.85" fill="#ff0000"/><circle cx="27" cy="19.7" r="1.85" fill="#ff0000"/><circle cx="27" cy="26.8" r="1.85" fill="#ff0000"/></g><rect x="1.5" y="199.5" width="34" height="34" fill="url(#btn)" stroke="#8e8e8e" stroke-width="1.3"/><g transform="translate(1.5 199.5)"><path d="M5.9 15.7L26.9 26.8M14.2 5.7Q15 17 26.9 18.7" stroke="#111" stroke-width="1.2" fill="none"/><circle cx="5.9" cy="15.7" r="1.9" fill="#ff0000"/><circle cx="26.9" cy="26.8" r="1.9" fill="#ff0000"/><circle cx="14.2" cy="5.7" r="1.9" fill="#ff0000"/><circle cx="26.9" cy="18.7" r="1.9" fill="#ff0000"/></g><rect x="36.5" y="199.5" width="34" height="34" fill="url(#btn)" stroke="#8e8e8e" stroke-width="1.3"/><g transform="translate(36.5 199.5)"><path d="M5.9 17L11.1 14.4L16.3 11.4L21.8 8.5L27.4 5.3" stroke="#111" stroke-width="1.2" fill="none"/><path d="M14.4 26.8Q15 19 27 14.4" stroke="#111" stroke-width="1.2" fill="none"/><circle cx="5.9" cy="17" r="1.8" fill="#ff0000"/><circle cx="11.1" cy="14.4" r="1.8" fill="#ff0000"/><circle cx="16.3" cy="11.4" r="1.8" fill="#ff0000"/><circle cx="21.8" cy="8.5" r="1.8" fill="#ff0000"/><circle cx="27.4" cy="5.3" r="1.8" fill="#ff0000"/><circle cx="14.4" cy="26.8" r="1.8" fill="#ff0000"/><circle cx="15.4" cy="22.2" r="1.8" fill="#ff0000"/><circle cx="18" cy="17.9" r="1.8" fill="#ff0000"/><circle cx="22.2" cy="15.3" r="1.8" fill="#ff0000"/><circle cx="27" cy="14.4" r="1.8" fill="#ff0000"/></g><rect x="1.5" y="234.2" width="34" height="34" fill="url(#btn)" stroke="#8e8e8e" stroke-width="1.3"/><g transform="translate(1.5 234.2)"><path d="M8.3 6.7L17.8 18.2L26.5 14.3M17.8 18.2Q14.5 22 14.2 27.3" stroke="#111" stroke-width="1.2" fill="none"/><path d="M14.5 14.5A3.5 3.5 0 0 1 21 15" stroke="#555" stroke-width="0.7" fill="none"/><circle cx="17.8" cy="18.2" r="1.9" fill="#ff0000"/></g><rect x="36.5" y="234.2" width="34" height="34" fill="url(#btn)" stroke="#8e8e8e" stroke-width="1.3"/><g transform="translate(36.5 234.2)"><circle cx="20.2" cy="13.6" r="6.5" stroke="#111" stroke-width="1.2" fill="none"/><path d="M14.4 11L6.5 25.4" stroke="#111" stroke-width="1.2" fill="none"/><circle cx="14.4" cy="11" r="1.9" fill="#ff0000"/></g><rect x="1.5" y="268.9" width="34" height="34" fill="url(#btn)" stroke="#8e8e8e" stroke-width="1.3"/><g transform="translate(1.5 268.9)"><path d="M5 18.1L26.5 7M13.9 27.6Q15 16 26.5 14.5" stroke="#111" stroke-width="1.2" fill="none"/><circle cx="16.1" cy="12.1" r="1.9" fill="#ff0000"/><circle cx="26.5" cy="27.1" r="1.9" fill="#ff0000"/></g><rect x="36.5" y="268.9" width="34" height="34" fill="url(#btn)" stroke="#8e8e8e" stroke-width="1.3"/><g transform="translate(36.5 268.9)"><circle cx="16.3" cy="17.1" r="9.8" stroke="#111" stroke-width="1.2" fill="none"/><circle cx="16.3" cy="17.1" r="1.9" fill="#ff0000"/><circle cx="6.5" cy="17.1" r="1.9" fill="#ff0000"/><circle cx="26.1" cy="17.1" r="1.9" fill="#ff0000"/><circle cx="16.3" cy="7.3" r="1.9" fill="#ff0000"/><circle cx="16.3" cy="26.9" r="1.9" fill="#ff0000"/></g><rect x="1.5" y="312" width="34" height="34" fill="url(#btn)" stroke="#8e8e8e" stroke-width="1.3"/><g transform="translate(1.5 312)"><path d="M5.4 18L27.5 6.1M13.9 27.7Q15 16.5 27.5 14.6" stroke="#111" stroke-width="1.2" fill="none"/><circle cx="16.7" cy="12" r="1.9" fill="#ff0000"/><circle cx="17.8" cy="18.1" r="1.9" fill="#ff0000"/></g><rect x="36.5" y="312" width="34" height="34" fill="url(#btn)" stroke="#8e8e8e" stroke-width="1.3"/><g transform="translate(36.5 312)"><rect x="4.4" y="7.2" width="23.9" height="19.4" fill="none" stroke="#3a3a3a" stroke-width="1.8"/><path d="M6 25L27 8.5" stroke="#999" stroke-width="0.8" stroke-dasharray="1.5 1.5"/><circle cx="16.4" cy="16.9" r="1.9" fill="#ff0000"/></g><rect x="1.5" y="355.2" width="34" height="34" fill="url(#btn)" stroke="#8e8e8e" stroke-width="1.3"/><g transform="translate(1.5 355.2)"><path d="M6.2 17.6L27.5 6.1M14.7 26.9Q15.5 16 27.5 14.6" stroke="#111" stroke-width="1.2" fill="none"/><path d="M4.5 13l5.5-2.3-1 3z" fill="#111" stroke="#111" stroke-width="0.8"/><path d="M19.3 27v-4.5l-1.5 2M19.3 22.5l1.5 2" stroke="#111" stroke-width="1.2" fill="none"/><circle cx="13.6" cy="13.3" r="1.9" fill="#ff0000"/><circle cx="17.3" cy="18.8" r="1.9" fill="#ff0000"/></g><rect x="36.5" y="355.2" width="34" height="34" fill="url(#btn)" stroke="#8e8e8e" stroke-width="1.3"/><g transform="translate(36.5 355.2)"><path d="M5.1 17.6L26.7 6.1" stroke="#111" stroke-width="1.1" stroke-dasharray="2.5 2"/><circle cx="26.7" cy="6.1" r="1.3" fill="#111"/><circle cx="5.1" cy="17.6" r="1.3" fill="#111"/><path d="M4 14l5.5-2.3-1 3z" fill="#111"/><circle cx="13.1" cy="13.3" r="1.9" fill="#ff0000"/><text x="4.3" y="29.2" font-family="Liberation Sans" font-size="11.5" fill="#111">1</text><text x="23.8" y="19.5" font-family="Liberation Sans" font-size="11.5" fill="#111">2</text></g><rect x="1.5" y="398.3" width="34" height="34" fill="url(#btn)" stroke="#8e8e8e" stroke-width="1.3"/><g transform="translate(1.5 398.3)"><path d="M4.4 14.2L28.6 21.6M22.9 4.6L17 28.5" stroke="#111" stroke-width="1.2" fill="none"/><circle cx="19.3" cy="18.9" r="1.9" fill="#ff0000"/></g><rect x="36.5" y="398.3" width="34" height="34" fill="url(#btn)" stroke="#8e8e8e" stroke-width="1.3"/><g transform="translate(36.5 398.3)"><path d="M6.7 18L16.7 21.6M26.4 8.1L23.6 18.5" stroke="#111" stroke-width="1.2" fill="none"/><circle cx="22.1" cy="23.4" r="1.9" fill="#ff0000"/></g><rect x="1.5" y="441.3" width="34" height="34" rx="4" fill="url(#prs)" stroke="#a6a6a6" stroke-width="1"/><g transform="translate(1.5 441.3)"><text x="5.6" y="20.7" font-family="Liberation Sans" font-size="11" fill="#222">Auto</text></g><rect x="1.5" y="484.5" width="34" height="34" fill="url(#btn)" stroke="#8e8e8e" stroke-width="1.3"/><g transform="translate(1.5 484.5)"><path d="M13.1 5.2V20.7H29" stroke="#555" stroke-width="1.5" fill="none"/><text x="4.6" y="12" font-family="Liberation Sans" font-size="12" fill="#222">y</text><text x="22.6" y="28.4" font-family="Liberation Sans" font-size="12" fill="#222">x</text><circle cx="26.3" cy="6.3" r="1.9" fill="#ff0000"/></g><rect x="36.5" y="484.5" width="34" height="34" fill="url(#btn)" stroke="#8e8e8e" stroke-width="1.3"/><g transform="translate(36.5 484.5)"><path d="M4.4 25.7L20.9 9.1A17 17 0 0 1 28.3 25.7Z" stroke="#111" stroke-width="1.2" fill="none"/><text x="7.8" y="16" font-family="Liberation Sans" font-size="11" fill="#222">r</text><text x="17.6" y="22.8" font-family="Liberation Sans" font-size="11" fill="#222">α</text><circle cx="20.9" cy="8.8" r="1.9" fill="#ff0000"/></g><rect x="1.5" y="527.5" width="34" height="34" fill="url(#btn)" stroke="#8e8e8e" stroke-width="1.3"/><g transform="translate(1.5 527.5)"><path d="M8.1 8.5H25M8.1 8.5V24.7" stroke="#aaa" stroke-width="0.9"/><circle cx="8.1" cy="8.5" r="2.6" fill="#ff0000"/><circle cx="25" cy="8.5" r="1.3" fill="#111"/><circle cx="8.1" cy="24.7" r="1.3" fill="#111"/><text x="12" y="27" font-family="Liberation Sans" font-size="11" fill="#111">1</text><text x="22" y="19.3" font-family="Liberation Sans" font-size="11" fill="#111">2</text></g><rect x="36.5" y="527.5" width="34" height="34" fill="url(#btn)" stroke="#8e8e8e" stroke-width="1.3"/><g transform="translate(36.5 527.5)"><path d="M8.2 24.7H24.4V8.5" stroke="#aaa" stroke-width="0.9" fill="none"/><circle cx="24.4" cy="24.7" r="2.6" fill="#ff0000"/><circle cx="8.2" cy="24.7" r="1.3" fill="#111"/><circle cx="24.4" cy="8.5" r="1.3" fill="#111"/><text x="6.3" y="20.8" font-family="Liberation Sans" font-size="11" fill="#111">1</text><text x="16.3" y="13.9" font-family="Liberation Sans" font-size="11" fill="#111">2</text></g><rect x="1.5" y="570.5" width="34" height="34" fill="url(#btn)" stroke="#8e8e8e" stroke-width="1.3"/><g transform="translate(1.5 570.5)"><path d="M7.5 10.5a2.5 2.5 0 0 1 2.5-2.5h17a2 2 0 0 1 2 2v15.5a2 2 0 0 1-2 2h-13v-4.5h-4.5a2 2 0 0 1-2-2z" fill="none" stroke="#f4a0a0" stroke-width="0.9"/><circle cx="13.8" cy="14" r="3.6" fill="none" stroke="#f4a0a0" stroke-width="0.9"/><path d="M16 22.5L24 14.5V22.5z" fill="none" stroke="#f4a0a0" stroke-width="0.9"/><circle cx="16.2" cy="16.4" r="1.8" fill="#ff0000"/></g><rect x="1.5" y="613.6" width="34" height="34" rx="4" fill="url(#prs)" stroke="#a6a6a6" stroke-width="1"/><g transform="translate(1.5 613.6)"><path d="M13.2 16.9h7M16.7 13.4v7" stroke="#333" stroke-width="1.1"/></g><rect x="36.5" y="613.6" width="34" height="34" fill="url(#btn)" stroke="#8e8e8e" stroke-width="1.3"/><g transform="translate(36.5 613.6)"><path d="M3.9 15.8H27.9M15.9 3.8V27.8" stroke="#111" stroke-width="1.2"/><circle cx="15.9" cy="15.8" r="3.6" fill="none" stroke="#ff0000" stroke-width="1.1"/><path d="M12.3 15.8h7.2M15.9 12.200000000000001v7.2" stroke="#ff0000" stroke-width="0.9"/></g><rect x="1.5" y="648.3" width="34" height="34" fill="url(#btn)" stroke="#8e8e8e" stroke-width="1.3"/><g transform="translate(1.5 648.3)"><path d="M4.4 16.1H27.8" stroke="#111" stroke-width="1.2"/><circle cx="15.8" cy="16.1" r="3.6" fill="none" stroke="#ff0000" stroke-width="1.1"/><path d="M12.200000000000001 16.1h7.2M15.8 12.500000000000002v7.2" stroke="#ff0000" stroke-width="0.9"/></g><rect x="36.5" y="648.3" width="34" height="34" fill="url(#btn)" stroke="#8e8e8e" stroke-width="1.3"/><g transform="translate(36.5 648.3)"><path d="M15.9 4.6V28" stroke="#111" stroke-width="1.2"/><circle cx="15.9" cy="16.1" r="3.6" fill="none" stroke="#ff0000" stroke-width="1.1"/><path d="M12.3 16.1h7.2M15.9 12.500000000000002v7.2" stroke="#ff0000" stroke-width="0.9"/></g><rect x="1.5" y="683.5" width="34" height="34" fill="url(#btn)" stroke="#8e8e8e" stroke-width="1.3"/><g transform="translate(1.5 683.5)"><path d="M7.3 25.7L25.5 14.7" stroke="#111" stroke-width="1.2"/><g stroke="#7a7a7a" stroke-width="1"><path d="M7.9 9.2L8.0 5.2M12.7 10.1L14.0 6.3M17.0 12.4L19.3 9.1M20.5 15.8L23.7 13.4M22.8 20.1L26.6 18.7M23.8 24.8L27.8 24.6"/></g><circle cx="7.3" cy="25.7" r="3.6" fill="none" stroke="#ff0000" stroke-width="1.1"/><path d="M3.6999999999999997 25.7h7.2M7.3 22.099999999999998v7.2" stroke="#ff0000" stroke-width="0.9"/></g><rect x="1.5" y="726.7" width="34" height="34" fill="url(#btn)" stroke="#8e8e8e" stroke-width="1.3"/><g transform="translate(1.5 726.7)"><circle cx="13.4" cy="10.5" r="3.6" fill="none" stroke="#ff0000" stroke-width="1.1"/><path d="M9.8 10.5h7.2M13.4 6.9v7.2" stroke="#ff0000" stroke-width="0.9"/><path d="M14.9 12.3V23L17.3 20.8L19.3 25.2L21 24.4L19.1 20H22.5Z" fill="#fff" stroke="#444" stroke-width="0.8" stroke-linejoin="round"/></g><rect x="36.5" y="726.7" width="34" height="34" fill="url(#btn)" stroke="#8e8e8e" stroke-width="1.3"/><g transform="translate(36.5 726.7)"><ellipse cx="9.7" cy="11.6" rx="2.7" ry="4" fill="none" stroke="#111" stroke-width="1.6"/><path d="M12.4 11.6H25.4M22 11.6v3.8M25 11.6v3.8" stroke="#111" stroke-width="2"/><circle cx="16.1" cy="24" r="3.4" fill="none" stroke="#ff0000" stroke-width="1.1"/><path d="M12.700000000000001 24h6.8M16.1 20.6v6.8" stroke="#ff0000" stroke-width="0.9"/></g><rect x="1.5" y="769.3" width="34" height="40" fill="url(#btn)" stroke="#8e8e8e" stroke-width="1.3"/><g transform="translate(1.5 769.3)"><ellipse cx="9.85" cy="16" rx="2.7" ry="4" fill="none" stroke="#111" stroke-width="1.6"/><path d="M12.5 16H24.8M21.4 16v3.8M24.4 16v3.8" stroke="#111" stroke-width="2"/></g></svg><svg style="left:0;top:0" width="1500" height="844" viewBox="0 0 1500 844"><circle cx="101.8" cy="118.3" r="5.6" fill="#f0f0f8" stroke="#2c3c8c" stroke-width="1.6"/><path d="M98 118.3h7.5M101.8 114.5v7.5" stroke="#9aa" stroke-width="0.6"/><path d="M101 117.5L107 123.5" stroke="#f0b020" stroke-width="2"/><path d="M106.5 123l1.5 1.5" stroke="#e05050" stroke-width="2"/><circle cx="1164" cy="118" r="7" fill="#6e6e6e"/><path d="M1161 115l6 6M1167 115l-6 6" stroke="#fff" stroke-width="1.8"/><circle cx="1182" cy="118" r="7" fill="#6e6e6e"/><rect x="1181" y="113.5" width="5" height="4" fill="none" stroke="#fff" stroke-width="1.1"/><rect x="1178" y="116.5" width="5.5" height="4.5" fill="#6e6e6e" stroke="#fff" stroke-width="1.1"/><rect x="1155.5" y="130.5" width="59.5" height="25.5" fill="url(#dockbtn)" stroke="#b0b0b0" stroke-width="1.6"/><rect x="1215" y="130.5" width="60" height="25.5" fill="url(#dockbtn)" stroke="#b0b0b0" stroke-width="1.6"/><rect x="1275" y="130.5" width="60" height="25.5" fill="url(#dockbtn)" stroke="#b0b0b0" stroke-width="1.6"/><rect x="1335" y="130.5" width="60" height="25.5" fill="url(#dockbtn)" stroke="#b0b0b0" stroke-width="1.6"/><rect x="1395" y="130.5" width="59.5" height="25.5" fill="url(#dockbtn)" stroke="#b0b0b0" stroke-width="1.6"/><g transform="translate(1185.2 142.6) scale(1.0)"><path d="M-7.5 0.3C-5 -4.5 5 -4.5 7.5 0.3C5 5 -5 5 -7.5 0.3Z" fill="#fff" stroke="#000" stroke-width="2"/><circle cx="0" cy="0.3" r="3" fill="#000"/><path d="M-7.5 0.3C-5 -5.5 5 -5.5 7.5 0.3" fill="none" stroke="#000" stroke-width="2.6"/></g><g transform="translate(1245 142.6) scale(1.0)"><path d="M-7.5 0.3C-5 -4.5 5 -4.5 7.5 0.3C5 5 -5 5 -7.5 0.3Z" fill="#fff" stroke="#9a9a9a" stroke-width="2"/><circle cx="0" cy="0.3" r="3" fill="#9a9a9a"/><path d="M-7.5 0.3C-5 -5.5 5 -5.5 7.5 0.3" fill="none" stroke="#9a9a9a" stroke-width="2.6"/></g><path d="M1303.5 137h3.2v4.3h4.3v3.2h-4.3v4.3h-3.2v-4.3h-4.3v-3.2h4.3z" fill="#e00000" stroke="#900" stroke-width="0.4"/><rect x="1359" y="140.8" width="12" height="4.5" fill="#e00000" stroke="#900" stroke-width="0.4"/><path d="M1418 149.5L1432.5 136" stroke="#b07818" stroke-width="3.4" stroke-linecap="butt"/><path d="M1418 149.5L1432.5 136" stroke="#f0c040" stroke-width="1.6"/><path d="M1430.3 138L1432.5 136" stroke="#e02020" stroke-width="3.4"/><circle cx="1418" cy="149.5" r="0.9" fill="#333"/><rect x="1161.5" y="163.5" width="15" height="8" fill="#fff" stroke="#000" stroke-width="1.3"/><text x="1183" y="171.6" font-family="Liberation Sans" font-size="13" fill="#000">0</text><path d="M1394.8 173.2L1408 160.8" stroke="#b07818" stroke-width="3.4" stroke-linecap="butt"/><path d="M1394.8 173.2L1408 160.8" stroke="#f0c040" stroke-width="1.6"/><path d="M1405.8 162.8L1408 160.8" stroke="#e02020" stroke-width="3.4"/><circle cx="1394.8" cy="173.2" r="0.9" fill="#333"/><g transform="translate(1423 166.5) scale(0.95)"><path d="M-7.5 0.3C-5 -4.5 5 -4.5 7.5 0.3C5 5 -5 5 -7.5 0.3Z" fill="#fff" stroke="#000" stroke-width="2"/><circle cx="0" cy="0.3" r="3" fill="#000"/><path d="M-7.5 0.3C-5 -5.5 5 -5.5 7.5 0.3" fill="none" stroke="#000" stroke-width="2.6"/></g><path d="M1441.5 167v-2.5a3.5 3.5 0 0 1 7 0v2.5" fill="none" stroke="#b8b8b8" stroke-width="1.5"/><rect x="1440" y="166.5" width="10" height="7.5" rx="1" fill="#b8b8b8"/><rect x="1462.5" y="116.5" width="1.6" height="1.6" fill="#9a9a9a"/><rect x="1467.5" y="116.5" width="1.6" height="1.6" fill="#9a9a9a"/><rect x="1472.5" y="116.5" width="1.6" height="1.6" fill="#9a9a9a"/><rect x="1477.5" y="116.5" width="1.6" height="1.6" fill="#9a9a9a"/><rect x="1482.5" y="116.5" width="1.6" height="1.6" fill="#9a9a9a"/><rect x="1487.5" y="116.5" width="1.6" height="1.6" fill="#9a9a9a"/><line x1="1457" y1="262" x2="1499" y2="262" stroke="#7a7a7a" stroke-dasharray="1 2"/><line x1="1457" y1="410" x2="1499" y2="410" stroke="#7a7a7a" stroke-dasharray="1 2"/><rect x="1456.3" y="120.3" width="42.2" height="42.2" rx="5" fill="#b6b6b6"/><rect x="1456.3" y="416.8" width="42.5" height="42.9" rx="5" fill="#b6b6b6"/><rect x="1463.5" y="127.5" width="27" height="27" fill="#fff" stroke="#2a2a2a" stroke-width="0.85"/><rect x="1463.5" y="127.5" width="27" height="4" fill="#000"/><rect x="1464.3" y="128.2" width="3.3" height="3" fill="#fff"/><path d="M1469.5 139l6-3v11.5l-6 3z" fill="#8a8a8a" stroke="#555" stroke-width="0.6"/><path d="M1472 138l8-3.5v12l-8 3.5z" fill="#d8d8d8" stroke="#555" stroke-width="0.6"/><path d="M1474.5 137l10-3.5v11.5l-10 3.5z" fill="#fff" stroke="#555" stroke-width="0.6"/><path d="M1477 145.5l4.5-8.5v7.5z" fill="none" stroke="#e83030" stroke-width="0.8"/><rect x="1463.5" y="174.5" width="27" height="27" fill="#fff" stroke="#2a2a2a" stroke-width="0.85"/><rect x="1463.5" y="174.5" width="27" height="4" fill="#000"/><rect x="1464.3" y="175.2" width="3.3" height="3" fill="#fff"/><rect x="1469.5" y="184" width="11.5" height="7" fill="#f4e8b8" stroke="#888" stroke-width="0.8"/><circle cx="1479" cy="191" r="4.6" fill="#f4e8b8" fill-opacity="0.8" stroke="#888" stroke-width="0.8"/><rect x="1463.5" y="220.8" width="27" height="27" fill="#fff" stroke="#2a2a2a" stroke-width="0.85"/><rect x="1463.5" y="220.8" width="27" height="4" fill="#000"/><rect x="1464.3" y="221.5" width="3.3" height="3" fill="#fff"/><rect x="1468.5" y="230.5" width="17" height="11" rx="2" fill="#f4f4f2" stroke="#c4d4ea" stroke-width="1"/><rect x="1463.5" y="276.5" width="27" height="27" fill="#fff" stroke="#2a2a2a" stroke-width="0.85"/><rect x="1463.5" y="276.5" width="27" height="4" fill="#000"/><rect x="1464.3" y="277.2" width="3.3" height="3" fill="#fff"/><rect x="1466.2" y="285.5" width="4.6" height="3.2" rx="0.8" fill="#000"/><rect x="1473.3" y="285.5" width="14.3" height="3.2" fill="#fff" stroke="#333" stroke-width="0.7"/><rect x="1466.2" y="291.4" width="4.6" height="3.2" rx="0.8" fill="#000"/><rect x="1473.3" y="291.4" width="14.3" height="3.2" fill="#fff" stroke="#333" stroke-width="0.7"/><rect x="1466.2" y="297.3" width="4.6" height="3.2" rx="0.8" fill="#000"/><rect x="1473.3" y="297.3" width="14.3" height="3.2" fill="#fff" stroke="#333" stroke-width="0.7"/><rect x="1463.5" y="322.9" width="27" height="27" fill="#fff" stroke="#2a2a2a" stroke-width="0.85"/><rect x="1463.5" y="322.9" width="27" height="4" fill="#000"/><rect x="1464.3" y="323.59999999999997" width="3.3" height="3" fill="#fff"/><path d="M1469.5 332.5c0-2 14-2 14 0l-5.5 6v7l-2.5-1.5v-5.5z" fill="#9a9a9a" stroke="#555" stroke-width="0.6"/><ellipse cx="1476.5" cy="332.3" rx="7" ry="1.5" fill="#c8c8c8"/><rect x="1463.5" y="368.5" width="27" height="27" fill="#fff" stroke="#2a2a2a" stroke-width="0.85"/><rect x="1463.5" y="368.5" width="27" height="4" fill="#000"/><rect x="1464.3" y="369.2" width="3.3" height="3" fill="#fff"/><path d="M1469 377.5v14.5l4.5-4v-6.5z" fill="#fff" stroke="#333" stroke-width="0.7"/><rect x="1473.5" y="380.5" width="11.5" height="8" rx="1.5" fill="#aaa" stroke="#555" stroke-width="0.6"/><rect x="1473.5" y="380.5" width="4" height="8" fill="#eee" stroke="#555" stroke-width="0.6"/><path d="M1466 384.5h22" stroke="#f08080" stroke-width="0.8" stroke-dasharray="1.5 1"/><rect x="1463.5" y="424.5" width="27" height="27" fill="#fff" stroke="#2a2a2a" stroke-width="0.85"/><rect x="1463.5" y="424.5" width="27" height="4" fill="#000"/><rect x="1464.3" y="425.2" width="3.3" height="3" fill="#fff"/><g stroke="#b0b0b0" stroke-width="0.9"><path d="M1466 433h11M1466 436.5h10M1466 440h12M1466 443.5h12"/></g><path d="M1464 446.8h26" stroke="#000" stroke-width="0.8"/><path d="M1466 449.5h3M1473 449.5h15" stroke="#666" stroke-width="0.8"/><rect x="1463.5" y="471.8" width="27" height="27" fill="#fff" stroke="#2a2a2a" stroke-width="0.85"/><rect x="1463.5" y="471.8" width="27" height="4" fill="#000"/><rect x="1464.3" y="472.5" width="3.3" height="3" fill="#fff"/><rect x="1470.5" y="480" width="13" height="14.5" rx="1" fill="#b88a3a" stroke="#8a6420" stroke-width="0.6"/><rect x="1472" y="482" width="10" height="11" fill="#eee"/><rect x="1474" y="478.5" width="6" height="3" rx="1" fill="#a8a8a8"/><path d="M1473.5 485h7M1473.5 487h7M1473.5 489h5" stroke="#bbb" stroke-width="0.6"/><rect x="1133.5" y="780.5" width="13.5" height="9" fill="#fff" stroke="#555" stroke-width="0.9"/><rect x="1133.5" y="780.3" width="13.5" height="2.6" fill="#111"/><rect x="1144" y="781" width="1" height="1" fill="#fff"/><circle cx="509.5" cy="822" r="3" fill="#c6c6c6"/><circle cx="943.4" cy="822" r="3" fill="#c6c6c6"/><circle cx="1272" cy="822" r="3" fill="#c6c6c6"/><rect x="717.5" y="806.3" width="17" height="29" rx="8.5" fill="#fff" stroke="#555" stroke-width="0.9"/><path d="M717.8 820.5Q726 817.5 734.2 820.5" fill="none" stroke="#444" stroke-width="1.1"/><path d="M726 806.5v13" stroke="#444" stroke-width="0.9"/><rect x="724.3" y="808.3" width="3.4" height="7" rx="1.7" fill="#fff" stroke="#444" stroke-width="0.9"/><path d="M254.5 802v40" stroke="#fff" stroke-width="1"/></svg><div class="st" style="left:646.5px;top:817px">Eerste punt</div><div class="st" style="left:754px;top:817px">Annuleer</div><div class="st" style="left:949px;top:817px">Geen objecten geselecteerd.</div>
</body></html>
